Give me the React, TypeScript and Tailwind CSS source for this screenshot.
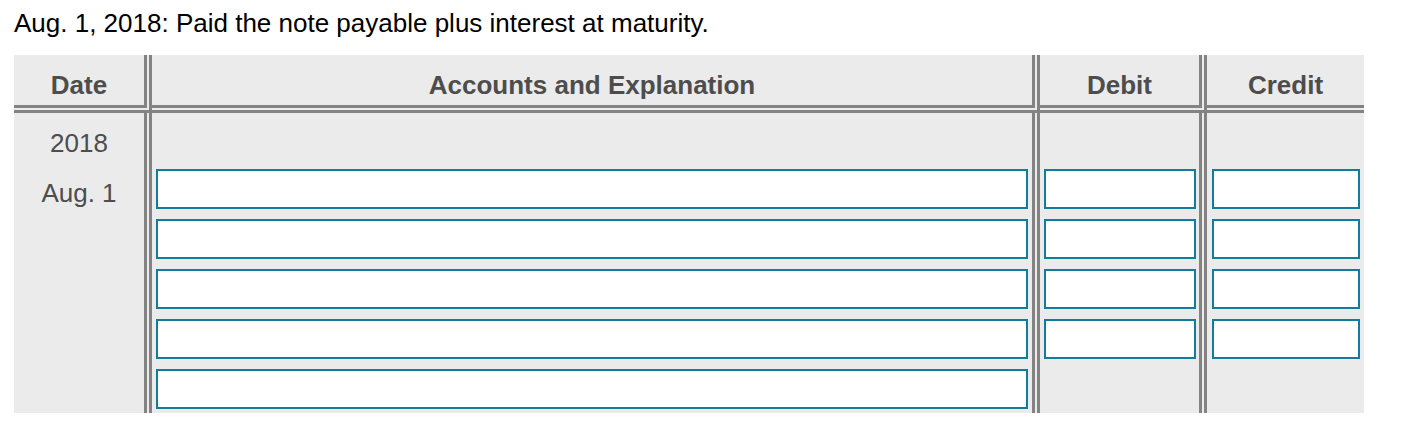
const font = { fontFamily: '"Liberation Sans", Arial, Helvetica, sans-serif' };

const Field = () => (
  <input
    type="text"
    className="block h-[40px] w-full border-2 border-[#127c9d] bg-white outline-none"
  />
);

const headCell =
  'flex h-[58px] items-center justify-center border-b-[8px] border-double border-[#838383] pt-[10px] text-[26px] leading-[30px] font-bold text-[#4d4d4d]';

export default function App() {
  const accountRows = [0, 1, 2, 3, 4];
  const amountRows = [0, 1, 2, 3];

  return (
    <div className="min-h-[436px] bg-white" style={font}>
      <p className="pt-[8px] pl-[14px] text-[26px] leading-[30px] text-black">
        Aug. 1, 2018: Paid the note payable plus interest at maturity.
      </p>

      <div className="mt-[17px] ml-[14px] w-[1350px] bg-[#ebebeb]">
        {/* header */}
        <div className="flex">
          <div className={`${headCell} w-[138px] border-r-[8px]`}>Date</div>
          <div className={`${headCell} w-[888px] border-r-[8px]`}>
            Accounts and Explanation
          </div>
          <div className={`${headCell} w-[167px] border-r-[8px]`}>Debit</div>
          <div className={`${headCell} flex-1`}>Credit</div>
        </div>

        {/* body */}
        <div className="flex">
          <div className="w-[138px] border-r-[8px] border-double border-[#838383] pt-[5px] text-center text-[26px] leading-[50px] text-[#4d4d4d]">
            <div>2018</div>
            <div>Aug. 1</div>
          </div>
          <div className="flex w-[888px] flex-col gap-[10px] border-r-[8px] border-double border-[#838383] px-[4px] pt-[56px] pb-[4px]">
            {accountRows.map(r => (
              <Field key={r} />
            ))}
          </div>
          <div className="flex w-[167px] flex-col gap-[10px] border-r-[8px] border-double border-[#838383] pt-[56px] pr-[3px] pl-[4px]">
            {amountRows.map(r => (
              <Field key={r} />
            ))}
          </div>
          <div className="flex flex-1 flex-col gap-[10px] pt-[56px] pr-[4px] pl-[5px]">
            {amountRows.map(r => (
              <Field key={r} />
            ))}
          </div>
        </div>
      </div>
    </div>
  );
}
